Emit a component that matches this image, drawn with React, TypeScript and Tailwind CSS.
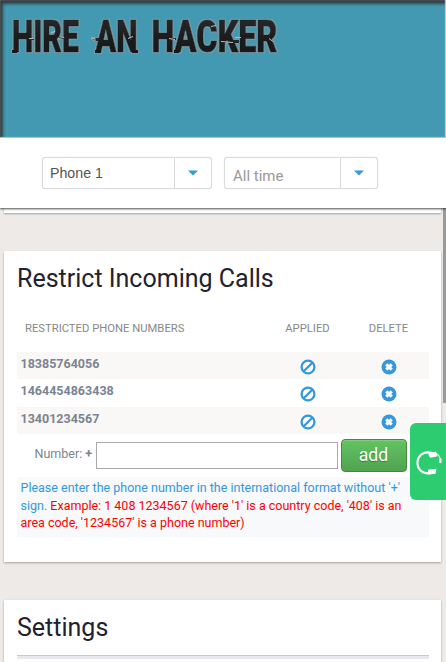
import React from "react";

const restricted = ["18385764056", "1464454863438", "13401234567"];

const words = [
  { text: "HIRE", x: 12, width: 67 },
  { text: "AN", x: 95.5, width: 42 },
  { text: "HACKER", x: 151.5, width: 126 },
];

function Logo() {
  return (
    <svg width="300" height="64" className="block" role="img" aria-label="HIRE AN HACKER">
      <defs>
        <linearGradient id="ink" x1="0" y1="0" x2="0" y2="1">
          <stop offset="0" stopColor="#2c2f31" />
          <stop offset="0.5" stopColor="#1b1d1f" />
          <stop offset="1" stopColor="#141618" />
        </linearGradient>
        <filter id="rim" x="-5%" y="-20%" width="110%" height="140%">
          <feMorphology in="SourceAlpha" operator="dilate" radius="1" result="grown" />
          <feFlood floodColor="#84979c" floodOpacity="0.85" />
          <feComposite in2="grown" operator="in" result="edge" />
          <feOffset in="edge" dx="-0.2" dy="0" result="moved" />
          <feMerge>
            <feMergeNode in="moved" />
            <feMergeNode in="SourceGraphic" />
          </feMerge>
        </filter>
      </defs>
      <g fontFamily="Roboto, sans-serif" fontWeight="900" fontSize="44.5" fill="url(#ink)" stroke="#1d2022" strokeWidth="0.6" filter="url(#rim)">
        {words.map((w) => (
          <text key={w.text} x={w.x} y="52.3" textLength={w.width} lengthAdjust="spacingAndGlyphs">
            {w.text}
          </text>
        ))}
        <path d="M30 38.5h4v1.5h-4zM92 38h8l-1 3h-4zM169 38h7v2h-6zM59 37h6v2h-6zM12 50h5v3h-5zM132 50h6v3h-6zM95 50h6v3h-6zM174 50h5v3h-5zM233 40h6v3h-6z" stroke="none" />
      </g>
      <path d="M29 38.5h4.5M51 32.5l4 -1M58 38.5l6 -1M91 38l4 .5v2.5M128 38.5l5 -2M169 38.5l6 1M211 26.5l5 -1M221 41.5l12 1M235 37.5h6M269 38.5l4 3" stroke="#b7c2c5" fill="none" />
    </svg>
  );
}

function Picker({ label, className, labelClass, arrowClass }: { label: string; className: string; labelClass: string; arrowClass: string }) {
  return (
    <div className={`flex h-8 rounded-[3px] border border-[#d9dadd] bg-white shadow-[0_0_1px_#d9dadd] ${className}`}>
      <div className={`flex-1 whitespace-nowrap ${labelClass}`}>{label}</div>
      <div className={`flex items-center justify-center border-l border-[#d9dadd] ${arrowClass}`}>
        <svg width="10" height="6" viewBox="0 0 10 6">
          <path d="M0 0.5h10L5 5.5z" fill="#3498db" />
        </svg>
      </div>
    </div>
  );
}

function BanIcon() {
  return (
    <svg width="16" height="16" viewBox="0 0 16 16" className="mx-auto block">
      <circle cx="8" cy="8" r="6.4" fill="#fff" stroke="#3498db" strokeWidth="2.3" />
      <path d="M3.7 12.3l8.6-8.6" stroke="#3498db" strokeWidth="2.3" />
    </svg>
  );
}

function RemoveIcon() {
  return (
    <svg width="16" height="16" viewBox="0 0 16 16" className="mx-auto block">
      <circle cx="8" cy="8" r="7.5" fill="#3498db" />
      <path d="M5.3 5.3l5.4 5.4M10.7 5.3l-5.4 5.4" stroke="#fff" strokeWidth="3.1" />
    </svg>
  );
}

const cardShadow = "shadow-[0_1px_2px_rgba(0,0,0,0.32)]";

export default function App() {
  return (
    <div className="relative h-[662px] w-[446px] overflow-hidden bg-[#eeeae7] font-[Roboto,sans-serif]">
      <header className="h-[138px] bg-[#4299b1] shadow-[inset_0_-1px_1px_#b9d7d9,inset_-1px_0_1px_#b9d7d9,inset_3px_4px_3px_#373f41]">
        <Logo />
      </header>
      <nav className="relative z-10 flex h-[70px] gap-[12px] bg-white pl-[42px] pt-[19px] shadow-[0_1px_2px_rgba(0,0,0,0.7)]">
        <Picker label="Phone 1" className="w-[170px]" labelClass="pl-[7px] font-['Liberation_Sans',sans-serif] text-[14.2px] leading-[30px] text-[#555]" arrowClass="w-[37px]" />
        <Picker label="All time" className="w-[154px]" labelClass="pl-[8px] pt-[2px] text-[15px] leading-[32px] text-[#999]" arrowClass="w-[37px]" />
      </nav>
      <main className="px-1 pr-[5px]">
        <section className={`h-[5px] bg-white ${cardShadow}`} />
        <section className={`mt-[38px] h-[311px] bg-white px-[13px] pr-[12px] ${cardShadow}`}>
          <h2 className="h-[65px] pt-[11px] text-[25px] leading-[34px] text-[#22222e]">Restrict Incoming Calls</h2>
          <div className="grid h-[36px] grid-cols-[250px_81px_81px] text-[11.25px] leading-[25px] text-[#888]">
            <div className="pl-2">RESTRICTED PHONE NUMBERS</div>
            <div className="text-center">APPLIED</div>
            <div className="text-center">DELETE</div>
          </div>
          {restricted.map((number) => (
            <div key={number} className="grid h-[27.4px] grid-cols-[250px_81px_81px] odd:bg-[#faf8f7]">
              <div className="pl-[3.5px] text-[12.5px] font-bold leading-[24.5px] text-[#7b8491]">{number}</div>
              <div className="pt-[7px]"><BanIcon /></div>
              <div className="pt-[7px]"><RemoveIcon /></div>
            </div>
          ))}
          <div className="flex h-[42.8px] pt-[5px]">
            <label className="w-[78.5px] whitespace-nowrap pl-[17.5px] pt-[6px] text-[12.5px] leading-[18px] text-[#7b8491]">
              Number: <b>+</b>
            </label>
            <div className="mt-[3px] h-[27px] w-[242px] border border-[#aaa] bg-white" />
            <button className="ml-[3px] h-[33px] w-[66px] rounded-[4px] border border-[#43883d] bg-linear-to-b from-[#62c462] to-[#51a351] pb-[2px] text-[17.6px] leading-[26px] text-white shadow-[inset_0_1px_1px_rgba(255,255,255,0.2)] [text-shadow:0_1px_1px_rgba(0,0,0,0.3)]">
              add
            </button>
          </div>
          <p className="h-[60px] whitespace-nowrap bg-[#f7f9fb] pl-[3.5px] pt-[2px] text-[12.5px] leading-[17.6px] text-[#ff0000]">
            <span className="text-[#3498db]">
              Please enter the phone number in the international format without '+'
              <br />
              sign.
            </span>{" "}
            Example: 1 408 1234567 (where '1' is a country code, '408' is an
            <br />
            area code, '1234567' is a phone number)
          </p>
        </section>
        <section className={`mt-[37.5px] h-[80px] bg-white px-[13px] pr-[12px] ${cardShadow}`}>
          <h2 className="h-[56.5px] border-b border-[#c8c8cf] pt-[11px] text-[25px] leading-[34px] text-[#22222e]">Settings</h2>
          <div className="h-[3px] bg-[#e9e9ed]" />
        </section>
      </main>
      <div className="absolute right-0 top-[208px] h-[195px] w-[3.5px] bg-[#999]" />
      <div className="absolute right-0 top-[422.5px] flex h-[77.5px] w-9 items-center rounded-l-[6px] bg-[#2ecc71]">
        <svg width="36" height="28" viewBox="0 0 36 28" className="mt-[3px]">
          <path d="M22 4C13.5 1.5 7.5 7 7.5 14S13.5 26 22 23.8" fill="none" stroke="#fff" strokeWidth="2.1" />
          <path d="M18 3.5l8-.7 1.5 4.4-7 1.5q-2.2-1.5-2.5-5.2zM18.5 20.5l8-.7-1 5-6.8.8q-1.5-2.5-.2-5.1z" fill="#fff" />
          <path d="M26 4.2q4 2.5 4.6 7" fill="none" stroke="#fff" strokeWidth="1.1" />
          <ellipse cx="30.3" cy="11.8" rx="1.5" ry="2.4" fill="#fff" />
        </svg>
      </div>
    </div>
  );
}
